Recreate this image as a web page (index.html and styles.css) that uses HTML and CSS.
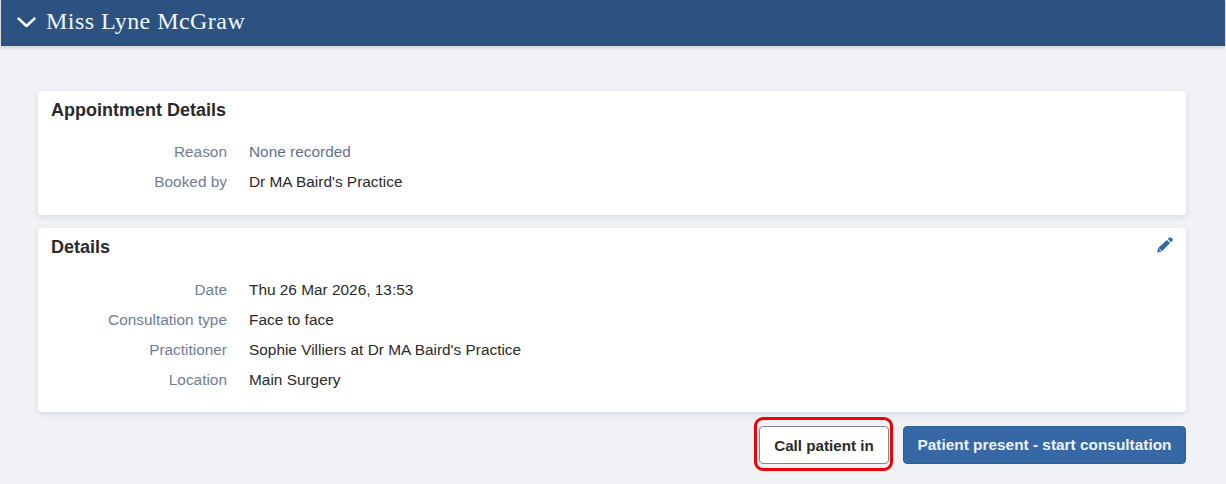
FILE: index.html
```html
<!DOCTYPE html>
<html lang="en">
<head>
  <meta charset="UTF-8">
  <title>Miss Lyne McGraw</title>
  <link rel="stylesheet" href="styles.css">
</head>
<body>
  <header class="patient-bar">
    <svg class="chevron" width="19" height="11" viewBox="0 0 19 11"><path d="M1.6 1.6 9.5 9l7.9-7.4" fill="none" stroke="#fff" stroke-width="2.6" stroke-linecap="round" stroke-linejoin="round"/></svg>
    <h1 class="patient-name">Miss Lyne McGraw</h1>
  </header>

  <main class="content">
    <section class="card card-appointment">
      <h2 class="card-title">Appointment Details</h2>
      <div class="row">
        <span class="label">Reason</span>
        <span class="value muted">None recorded</span>
      </div>
      <div class="row">
        <span class="label">Booked by</span>
        <span class="value">Dr MA Baird's Practice</span>
      </div>
    </section>

    <section class="card card-details">
      <div class="card-head">
        <h2 class="card-title">Details</h2>
        <svg class="edit-icon" width="16" height="16" viewBox="0 0 16 16"><path fill="#3668a8" d="M12.1.7a1.6 1.6 0 0 1 2.2 0l1 1a1.6 1.6 0 0 1 0 2.2l-1.3 1.3-3.2-3.2zM9.9 2.9l3.2 3.2-8.2 8.2-4.2 1.2a.4.4 0 0 1-.5-.5l1.2-4.2z"/><path fill="#fff" d="M2.6 11.4l2 2-.9.3-1.4-1.4z"/></svg>
      </div>
      <div class="row">
        <span class="label">Date</span>
        <span class="value">Thu 26 Mar 2026, 13:53</span>
      </div>
      <div class="row">
        <span class="label">Consultation type</span>
        <span class="value">Face to face</span>
      </div>
      <div class="row">
        <span class="label">Practitioner</span>
        <span class="value">Sophie Villiers at Dr MA Baird's Practice</span>
      </div>
      <div class="row">
        <span class="label">Location</span>
        <span class="value">Main Surgery</span>
      </div>
    </section>

    <div class="actions">
      <div class="highlight">
        <button class="btn btn-outline">Call patient in</button>
      </div>
      <button class="btn btn-primary">Patient present - start consultation</button>
    </div>
  </main>
</body>
</html>
```

FILE: styles.css
```css
html, body {
  height: 100%;
}
body {
  margin: 0;
  background-color: #f0f2f6;
  color: #2a2a2a;
  font-family: "Liberation Sans", Arial, sans-serif;
  font-size: 15.4px;
  overflow: hidden;
}
.patient-bar {
  height: 46px;
  margin: 0 1px;
  box-sizing: border-box;
  padding: 0 0 4px 16px;
  display: flex;
  align-items: center;
  gap: 10px;
  background-color: #2c5282;
  box-shadow: 0 1px 4px rgba(0, 0, 0, 0.22);
}
.chevron {
  margin-top: 3px;
}
.patient-name {
  margin: 0;
  color: #f2f5f9;
  font-family: "Liberation Serif", serif;
  font-size: 24px;
  font-weight: 400;
  letter-spacing: 0.45px;
}
.content {
  padding: 45px 40px 0 38px;
}
.card {
  background-color: #fff;
  border-radius: 4px;
  box-shadow: 0 2px 6px rgba(60, 70, 90, 0.14);
  padding: 10px 13px 0;
  box-sizing: border-box;
}
.card-appointment {
  height: 124px;
  margin-bottom: 13px;
}
.card-details {
  height: 184px;
}
.card-head {
  display: flex;
  justify-content: space-between;
  align-items: flex-start;
  margin-bottom: 1px;
}
.card-title {
  margin: 0 0 18px;
  font-size: 18px;
  line-height: 18px;
  font-weight: 700;
  color: #2a2a2a;
}
.edit-icon {
  margin-top: -1px;
}
.row {
  display: flex;
  gap: 22px;
  height: 30px;
  line-height: 30px;
}
.label {
  width: 176px;
  text-align: right;
  color: #707d94;
}
.value {
  color: #2a2a2a;
}
.value.muted {
  color: #5f7190;
}
.actions {
  display: flex;
  justify-content: flex-end;
  align-items: flex-start;
  gap: 10px;
  margin-top: 5px;
}
.highlight {
  padding: 6px 1px 4px 2px;
  border: 3px solid #f00000;
  border-radius: 9px;
}
.btn {
  display: block;
  height: 38px;
  box-sizing: border-box;
  border-radius: 4px;
  font-family: "Liberation Sans", Arial, sans-serif;
  font-size: 15.2px;
  font-weight: 700;
  padding: 0;
}
.btn-outline {
  width: 130px;
  background-color: #fff;
  color: #2a2a2a;
  border: 1px solid #7c8493;
}
.btn-primary {
  width: 283px;
  margin-top: 9px;
  background-color: #3668a6;
  color: #eef2f8;
  border: 1px solid #2f5f9c;
  font-size: 15.4px;
}
```
